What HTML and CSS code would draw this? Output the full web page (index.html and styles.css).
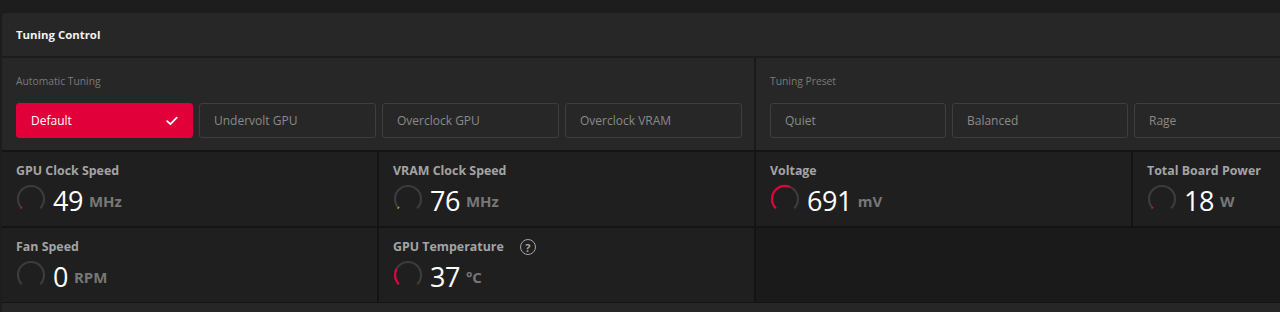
FILE: index.html
```html
<!DOCTYPE html>
<html>
<head>
<meta charset="utf-8">
<link rel="stylesheet" href="styles.css">
</head>
<body>
<div class="card">
  <div class="card-header">Tuning Control</div>
  <div class="tuning">
    <div class="panel">
      <div class="label">Automatic Tuning</div>
      <div class="btn-row">
        <button class="btn active">Default
          <svg class="check" width="12" height="10" viewBox="0 0 12 10"><path d="M1.2 5.2 L4.4 8.2 L10.8 1.6" fill="none" stroke="#fff" stroke-width="1.8" stroke-linecap="round" stroke-linejoin="round"/></svg>
        </button>
        <button class="btn">Undervolt GPU</button>
        <button class="btn">Overclock GPU</button>
        <button class="btn">Overclock VRAM</button>
      </div>
    </div>
    <div class="panel preset">
      <div class="label">Tuning Preset</div>
      <div class="btn-row">
        <button class="btn">Quiet</button>
        <button class="btn">Balanced</button>
        <button class="btn">Rage</button>
      </div>
    </div>
  </div>
  <div class="metrics">
    <div class="metric">
      <div class="m-title">GPU Clock Speed</div>
      <div class="m-row">
        <svg class="gauge" width="30" height="30" viewBox="0 0 30 30"><path class="track" d="M5.81 24.19 A13 13 0 1 1 24.19 24.19"/><path class="fill red" pathLength="100" stroke-dasharray="2 200" d="M5.81 24.19 A13 13 0 1 1 24.19 24.19"/></svg>
        <span class="value">49</span><span class="unit">MHz</span>
      </div>
    </div>
    <div class="metric">
      <div class="m-title">VRAM Clock Speed</div>
      <div class="m-row">
        <svg class="gauge" width="30" height="30" viewBox="0 0 30 30"><path class="track" d="M5.81 24.19 A13 13 0 1 1 24.19 24.19"/><path class="fill amber" pathLength="100" stroke-dasharray="2 200" d="M5.81 24.19 A13 13 0 1 1 24.19 24.19"/></svg>
        <span class="value">76</span><span class="unit">MHz</span>
      </div>
    </div>
    <div class="metric">
      <div class="m-title">Voltage</div>
      <div class="m-row">
        <svg class="gauge" width="30" height="30" viewBox="0 0 30 30"><path class="track" d="M5.81 24.19 A13 13 0 1 1 24.19 24.19"/><path class="fill red" pathLength="100" stroke-dasharray="58 200" d="M5.81 24.19 A13 13 0 1 1 24.19 24.19"/></svg>
        <span class="value">691</span><span class="unit">mV</span>
      </div>
    </div>
    <div class="metric">
      <div class="m-title">Total Board Power</div>
      <div class="m-row">
        <svg class="gauge" width="30" height="30" viewBox="0 0 30 30"><path class="track" d="M5.81 24.19 A13 13 0 1 1 24.19 24.19"/><path class="fill red" pathLength="100" stroke-dasharray="2 200" d="M5.81 24.19 A13 13 0 1 1 24.19 24.19"/></svg>
        <span class="value">18</span><span class="unit">W</span>
      </div>
    </div>
    <div class="metric">
      <div class="m-title">Fan Speed</div>
      <div class="m-row">
        <svg class="gauge" width="30" height="30" viewBox="0 0 30 30"><path class="track" d="M5.81 24.19 A13 13 0 1 1 24.19 24.19"/></svg>
        <span class="value">0</span><span class="unit">RPM</span>
      </div>
    </div>
    <div class="metric">
      <div class="m-title">GPU Temperature <span class="help">?</span></div>
      <div class="m-row">
        <svg class="gauge" width="30" height="30" viewBox="0 0 30 30"><path class="track" d="M5.81 24.19 A13 13 0 1 1 24.19 24.19"/><path class="fill red" pathLength="100" stroke-dasharray="27 200" d="M5.81 24.19 A13 13 0 1 1 24.19 24.19"/></svg>
        <span class="value">37</span><span class="unit">°C</span>
      </div>
    </div>
    <div class="metric empty"></div>
  </div>
  <div class="card-rest"></div>
</div>
</body>
</html>
```

FILE: styles.css
```css
html, body {
  margin: 0;
  padding: 0;
}
body {
  background: #1d1d1d;
  font-family: "Open Sans", "Noto Sans", sans-serif;
  overflow: hidden;
  width: 1280px;
  height: 312px;
  padding: 13px 0 0 2px;
  box-sizing: border-box;
}
.card {
  width: 1506px;
  background: #272727;
  border-radius: 4px 4px 0 0;
}
.card-header {
  height: 43px;
  display: flex;
  align-items: center;
  padding-left: 14px;
  color: #f2f2f2;
  font-weight: 700;
  font-size: 11.4px;
  border-bottom: 2px solid #1c1c1c;
}
.tuning {
  display: grid;
  grid-template-columns: 752px 752px;
  gap: 2px;
  background: #1a1a1a;
  border-bottom: 2px solid #141414;
}
.panel {
  background: #272727;
  padding: 15px 12px 12px 14px;
}
.panel.preset {
  padding-right: 16px;
}
.label {
  color: #7a7a7a;
  font-size: 10.3px;
  line-height: 16px;
  height: 16px;
}
.btn-row {
  display: grid;
  grid-template-columns: repeat(4, 1fr);
  gap: 6px;
  margin-top: 14px;
}
.btn {
  height: 35px;
  box-sizing: border-box;
  background: transparent;
  border: 1px solid #3e3e3e;
  border-radius: 3px;
  color: #8a8a8a;
  font-family: inherit;
  font-size: 12px;
  text-align: left;
  padding: 0 14px;
  display: flex;
  align-items: center;
  justify-content: space-between;
}
.btn.active {
  background: #e1003a;
  border-color: #e1003a;
  color: #ffffff;
}
.check {
  margin-right: 0;
}
.metrics {
  display: grid;
  grid-template-columns: repeat(4, 375px);
  grid-template-rows: 74px 74px;
  gap: 2px;
  background: #141414;
  border-bottom: 1px solid #141414;
}
.metric {
  background: #1f1f1f;
  padding: 11px 14px 0 14px;
}
.metric.empty {
  grid-column: span 2;
  background: #1a1a1a;
}
.m-title {
  color: #a4a4a4;
  font-weight: 700;
  font-size: 12.4px;
  line-height: 16px;
  height: 16px;
  display: flex;
  align-items: center;
}
.help {
  display: inline-flex;
  align-items: center;
  justify-content: center;
  width: 14px;
  height: 14px;
  border: 1.5px solid #a4a4a4;
  border-radius: 50%;
  font-size: 11px;
  font-weight: 700;
  margin-left: 16px;
  line-height: 1;
}
.m-row {
  display: flex;
  align-items: center;
  height: 30px;
  margin-top: 5px;
}
.gauge {
  display: block;
  margin-left: 0;
  margin-right: 7px;
}
.gauge path {
  fill: none;
  stroke-width: 2.2;
}
.gauge .track {
  stroke: #3c3c3c;
}
.gauge .red {
  stroke: #e4003a;
}
.gauge .amber {
  stroke: #e8a600;
}
.value {
  color: #ffffff;
  font-size: 27px;
  line-height: 30px;
  letter-spacing: -0.5px;
  position: relative;
  top: 2px;
}
.unit {
  color: #777777;
  font-weight: 700;
  font-size: 15px;
  margin-left: 6px;
  margin-top: 4px;
}
.card-rest {
  height: 20px;
  background: #262626;
}
```
